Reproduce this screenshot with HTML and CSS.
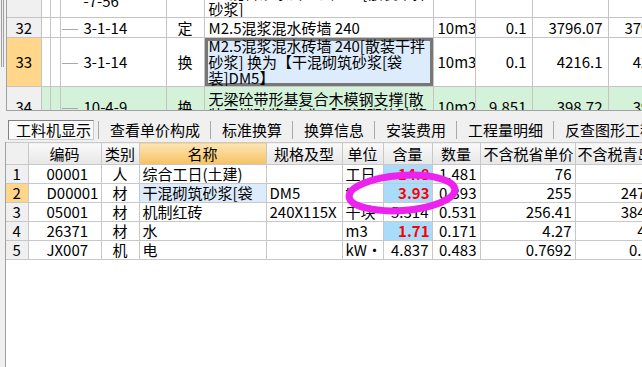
FILE: index.html
```html
<!DOCTYPE html>
<html lang="zh-CN">
<head>
    <meta charset="UTF-8">
    <title>工料机显示</title>
    <link rel="stylesheet" href="styles.css">
</head>
<body>

    <!-- Quota list (upper pane) -->
    <div class="top-pane">
        <div class="edge"><div class="edge-lines"></div></div>
        <div class="quota-wrap">
            <table class="quota-grid">
                <colgroup>
                    <col style="width:34px"><col style="width:9px"><col style="width:10px">
                    <col style="width:106px"><col style="width:38px"><col style="width:229px">
                    <col style="width:42px"><col style="width:57px"><col style="width:76px"><col style="width:76px">
                </colgroup>
                <tr class="row-cut">
                    <td class="num"></td><td></td><td></td>
                    <td class="code"><span class="tree-gap"></span>-7-56</td>
                    <td class="type"></td>
                    <td class="name">M5混合砂浆砖基础 240[散装干拌<br>砂浆]</td>
                    <td class="unit"></td><td class="val"></td><td class="val"></td><td class="val"></td>
                </tr>
                <tr class="row-32">
                    <td class="num">32</td><td></td><td></td>
                    <td class="code"><span class="tree"></span>3-1-14</td>
                    <td class="type">定</td>
                    <td class="name">M2.5混浆混水砖墙 240</td>
                    <td class="unit">10m3</td><td class="val">0.1</td><td class="val">3796.07</td><td class="val">3796.07</td>
                </tr>
                <tr class="row-33">
                    <td class="num current">33</td><td></td><td></td>
                    <td class="code"><span class="tree"></span>3-1-14</td>
                    <td class="type">换</td>
                    <td class="name selected">M2.5混浆混水砖墙 240[散装干拌<br>砂浆] 换为【干混砌筑砂浆[袋<br>装]DM5】</td>
                    <td class="unit">10m3</td><td class="val">0.1</td><td class="val">4216.1</td><td class="val">4216.1</td>
                </tr>
                <tr class="row-34 changed">
                    <td class="num">34</td><td></td><td></td>
                    <td class="code"><span class="tree"></span>10-4-9</td>
                    <td class="type">换</td>
                    <td class="name">无梁砼带形基复合木模钢支撑[散<br>装干拌砂浆] 换为【干混砌筑砂浆</td>
                    <td class="unit">10m2</td><td class="val">9.851</td><td class="val">398.72</td><td class="val">392.15</td>
                </tr>
            </table>
        </div>
    </div>

    <!-- Detail tabs -->
    <div class="tabs">
        <div class="tab active">工料机显示</div>
        <div class="sep"></div>
        <div class="tab">查看单价构成</div>
        <div class="sep"></div>
        <div class="tab">标准换算</div>
        <div class="sep"></div>
        <div class="tab">换算信息</div>
        <div class="sep"></div>
        <div class="tab">安装费用</div>
        <div class="sep"></div>
        <div class="tab">工程量明细</div>
        <div class="sep"></div>
        <div class="tab">反查图形工程量</div>
    </div>

    <!-- Labour / material / machine grid -->
    <div class="bottom-pane">
        <table class="mat-grid">
            <colgroup>
                <col style="width:22px"><col style="width:73px"><col style="width:38px"><col style="width:127px">
                <col style="width:76px"><col style="width:41px"><col style="width:49px"><col style="width:48px">
                <col style="width:95px"><col style="width:95px">
            </colgroup>
            <tr>
                <th class="num"></th><th>编码</th><th>类别</th><th class="sorted">名称</th><th>规格及型</th>
                <th>单位</th><th>含量</th><th>数量</th><th>不含税省单价</th><th class="clip">不含税青岛单价</th>
            </tr>
            <tr>
                <td class="num">1</td><td class="code">00001</td><td class="kind">人</td><td>综合工日(土建)</td><td></td>
                <td>工日</td><td class="val edited">14.8</td><td class="val">1.481</td><td class="val">76</td><td class="val"></td>
            </tr>
            <tr>
                <td class="num current">2</td><td class="code">D00001</td><td class="kind">材</td><td class="selected">干混砌筑砂浆[袋</td><td>DM5</td>
                <td>t</td><td class="val edited">3.93</td><td class="val">0.393</td><td class="val">255</td><td class="val">247.41</td>
            </tr>
            <tr>
                <td class="num">3</td><td class="code">05001</td><td class="kind">材</td><td>机制红砖</td><td>240X115X</td>
                <td>千块</td><td class="val">5.314</td><td class="val">0.531</td><td class="val">256.41</td><td class="val">384.62</td>
            </tr>
            <tr>
                <td class="num">4</td><td class="code">26371</td><td class="kind">材</td><td>水</td><td></td>
                <td>m3</td><td class="val edited">1.71</td><td class="val">0.171</td><td class="val">4.27</td><td class="val">4.13</td>
            </tr>
            <tr>
                <td class="num">5</td><td class="code">JX007</td><td class="kind">机</td><td>电</td><td></td>
                <td>kW·</td><td class="val">4.837</td><td class="val">0.483</td><td class="val">0.7692</td><td class="val">0.769</td>
            </tr>
        </table>
    </div>

    <!-- hand-drawn highlight -->
    <svg class="mark" width="130" height="52" viewBox="0 0 130 52">
        <ellipse cx="62" cy="25" rx="53" ry="17.5" transform="rotate(-4 62 25)" fill="none" stroke="#ee22ee" stroke-width="7"/>
    </svg>

</body>
</html>
```

FILE: styles.css
```css
body {
    margin: 0;
    width: 642px;
    height: 367px;
    overflow: hidden;
    position: relative;
    background: #f0f0f0;
    color: #000;
    font-family: "Noto Sans CJK SC", sans-serif;
    font-size: 15px;
}

table { border-collapse: collapse; table-layout: fixed; }

/* Upper pane */
.top-pane { display: flex; height: 111px; }
.edge { width: 6px; }
.edge-lines { margin-left: 1px; width: 1px; height: 67px; border-left: 1px solid #a0a0a0; border-right: 1px solid #a0a0a0; }
.quota-wrap {
    flex: 1;
    height: 110px;
    overflow: hidden;
    background: #fff;
    border-left: 1px solid #a0a0a0;
    border-bottom: 1px solid #a0a0a0;
}
.quota-grid { width: 677px; margin-top: -16px; }
.quota-grid td {
    border: 1px solid #c4c4c4;
    padding: 0 3px;
    line-height: 16px;
    white-space: nowrap;
    overflow: hidden;
    vertical-align: middle;
}
.quota-grid td:first-child { border-left: none; }
.row-cut td { height: 31px; }
.row-32 td { height: 19px; }
.row-33 td { height: 48px; }
.row-34 td { height: 39px; }

.num { background: #f0f0f0; text-align: center; }
.num.current { background: #ffd68a; }
.changed td:not(.num) { background: #d4f2da; }

.quota-grid .code { padding-left: 1px; }
.tree { display: inline-block; width: 16px; height: 1px; background: #a8a8a8; vertical-align: middle; margin-right: 6px; }
.tree-gap { display: inline-block; width: 22px; }
.type { text-align: center; }
.quota-grid .name { padding: 0 3px 0 4px; }
.quota-grid .selected { background: #ddecfc; box-shadow: inset 0 0 0 3px #777; }
.quota-grid .unit { padding-left: 4px; }
.quota-grid .val { text-align: right; padding-right: 5px; }

/* Tabs */
.tabs {
    display: flex;
    align-items: center;
    height: 24px;
    margin-top: 7px;
    padding-left: 8px;
    overflow: hidden;
    white-space: nowrap;
}
.tab { flex-shrink: 0; padding: 0 10px 0 11px; line-height: 18px; }
.tab.active {
    padding: 0 2px 0 7px;
    margin-right: 4px;
    border: 1px solid;
    border-color: #808080 #c8c8c8 #c8c8c8 #808080;
    background: #fafafa;
}
.sep { width: 1px; height: 18px; background: #a8a8a8; flex-shrink: 0; }

/* Lower pane */
.bottom-pane {
    margin-left: 5px;
    height: 225px;
    overflow: hidden;
    background: #fff;
    border-left: 1px solid #a0a0a0;
}
.mat-grid { width: 664px; }
.mat-grid th, .mat-grid td {
    border: 1px solid #c8c8c8;
    padding: 0 3px;
    height: 18px;
    line-height: 16px;
    white-space: nowrap;
    overflow: hidden;
}
.mat-grid th:first-child, .mat-grid td:first-child { border-left: none; }
.mat-grid th {
    height: 21px;
    font-weight: normal;
    background: linear-gradient(#fafafa, #e6e6e6);
}
.mat-grid th.sorted { background: linear-gradient(#fde5b4, #f6c262); }
.mat-grid th.clip { text-align: left; padding-left: 2px; }
.mat-grid .num { text-align: center; background: #f0f0f0; }
.mat-grid .num.current { background: #ffd68a; }
.mat-grid .code { padding-left: 18px; }
.kind { text-align: center; }
.mat-grid .selected { background: #ddecfc; }
.mat-grid .val { text-align: right; }
.mat-grid .edited { background: #a9dbfb; color: #ff0000; font-weight: bold; padding-right: 2px; }

.mark { position: absolute; left: 340px; top: 168px; }
```
